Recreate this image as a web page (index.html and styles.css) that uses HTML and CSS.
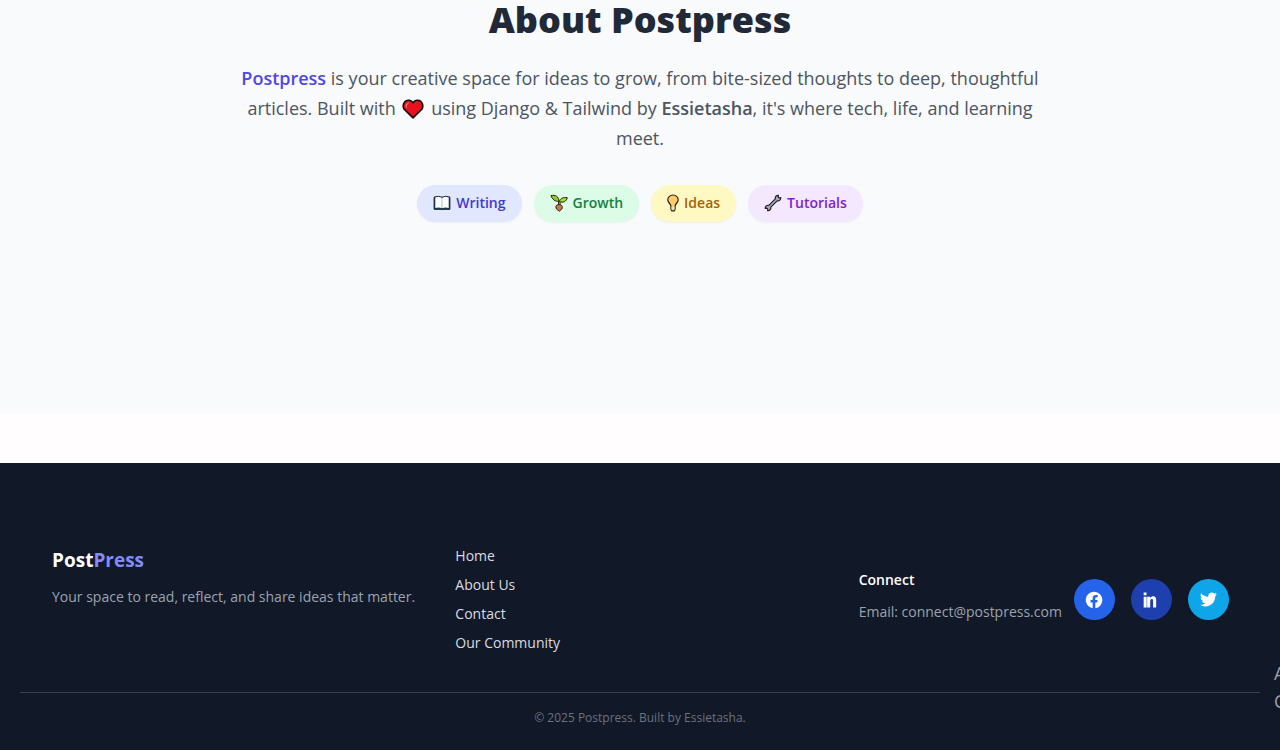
FILE: index.html
```html
<!DOCTYPE html>
<html lang="en">
<head>
<meta charset="utf-8">
<meta name="viewport" content="width=device-width, initial-scale=1">
<title>About Postpress</title>
<link rel="stylesheet" href="styles.css">
</head>
<body>
<main>
  <section class="about">
    <h1 class="about-title">About Postpress</h1>
    <p class="about-text"><strong class="brand-name">Postpress</strong> is your creative space for ideas to grow, from bite-sized thoughts to deep, thoughtful articles. Built with
      <svg class="heart" viewBox="0 0 22 20" role="img" aria-label="love"><path d="M11 18.8 1.9 10C1.2 8.5 1.1 6.4 1.6 4.8 2.5 2.6 4.3 1.3 6.5 1.3 8.5 1.3 10.1 2.2 11 3.8 11.9 2.2 13.5 1.3 15.5 1.3 17.7 1.3 19.5 2.6 20.4 4.8 20.9 6.4 20.8 8.5 20.1 10Z" fill="#e8121f" stroke="#150a0a" stroke-width="1.6" stroke-linejoin="round"/><path d="M4.4 8V5.8L6.2 4" fill="none" stroke="#ff6b6b" stroke-width="1.3" stroke-linecap="round"/></svg>
      using Django &amp; Tailwind by <strong class="author">Essietasha</strong>, it's where tech, life, and learning meet.</p>
    <ul class="tags">
      <li class="tag tag-writing"><svg class="tag-icon" viewBox="0 0 18 18" aria-hidden="true"><path d="M1 3.2H17V15.5H10L9 16.3 8 15.5H1Z" fill="#1d3b50"/><path d="M2.3 3.2Q6 2 8.9 3.4V14.2Q6 13.2 2.3 13.9ZM9.1 3.4Q12 2 15.7 3.2V13.9Q12 13.2 9.1 14.2Z" fill="#fff"/><path d="M1.1 3.2V15.3H16.9V3.2" fill="none" stroke="#172b3b"/><path d="M9 3.4V14" stroke="#b7bdc4" stroke-width=".6"/><path d="M1.1 3Q6 1.5 9 3.2 12 1.5 16.9 3" fill="none" stroke="#172b3b"/></svg>Writing</li>
      <li class="tag tag-growth"><svg class="tag-icon" viewBox="0 0 18 18" aria-hidden="true"><g stroke="#252410" stroke-linejoin="round"><path d="M9.3 12V7" stroke-width="2.6"/><path d="M9.3 12V7" stroke="#6db42c"/><path d="M9 7.3C5.2 7.8 2.3 5.4 1 1.6 5.5.5 9 2.8 9 7.3Z" fill="#8fce25"/><path d="M9.3 7.6C10.3 4.3 13.1 3 17.3 3.7 16.3 7.7 12.8 9 9.3 7.6Z" fill="#a4da32"/><path d="M9.3 10.6C6.5 10.3 5.5 12 6 14 6.5 15.7 8 16 9.3 17.2 10.5 16 12.1 15.6 12.3 13.8 12.5 11.9 11.5 10.6 9.3 10.6Z" fill="#cf7548"/></g></svg>Growth</li>
      <li class="tag tag-ideas"><svg class="tag-icon tag-icon-slim" viewBox="0 0 12 18" aria-hidden="true"><path d="M3.9 12C3.9 10 .8 8.7.8 5.8.8 3.1 3.2 1 6 1S11.2 3.1 11.2 5.8C11.2 8.7 8.1 10 8.1 12V15.2L7.2 16.8H4.8L3.9 15.2Z" fill="#ffcc66" stroke="#25221b" stroke-width="1.2"/><path d="M4.5 12.4H7.5V15.9H4.5Z" fill="#e6dfc4"/></svg>Ideas</li>
      <li class="tag tag-tutorials"><svg class="tag-icon" viewBox="0 0 18 18" aria-hidden="true"><path d="M11.3 4.8C11.1 2.6 12.3 1.2 14.4 1.3L14.2 2.9 15.1 3.8 16.8 3.6C16.9 5.8 15.3 7.1 13.2 6.8L6.8 13.2C7 15.5 5.7 16.9 3.6 16.7L3.8 15.1 2.9 14.2 1.2 14.4C1.1 12.2 2.7 11 4.8 11.3Z" fill="#a9aab2" stroke="#202027" stroke-width="1.2" stroke-linejoin="round"/></svg>Tutorials</li>
    </ul>
  </section>
</main>
<footer class="footer">
  <div class="footer-grid">
    <div>
      <h2 class="logo">Post<span class="logo-accent">Press</span></h2>
      <p class="muted">Your space to read, reflect, and share ideas that matter.</p>
    </div>
    <nav class="links" aria-label="Footer">
      <a href="#home">Home</a>
      <a href="#about">About Us</a>
      <a href="#contact">Contact</a>
      <a href="#community">Our Community</a>
    </nav>
    <div class="connect">
      <div class="connect-info">
        <h3 class="connect-title">Connect</h3>
        <p class="muted">Email: connect@postpress.com</p>
      </div>
      <div class="socials">
        <a class="social facebook" href="#facebook" aria-label="Facebook"><svg viewBox="0 0 24 24" aria-hidden="true"><path fill="currentColor" d="M22 12a10 10 0 1 0-11.6 9.9v-7H7.9V12h2.5V9.8c0-2.5 1.5-3.9 3.8-3.9 1.1 0 2.2.2 2.2.2v2.5h-1.3c-1.2 0-1.6.8-1.6 1.5V12h2.8l-.4 2.9h-2.3v7A10 10 0 0 0 22 12Z"/></svg></a>
        <a class="social linkedin" href="#linkedin" aria-label="LinkedIn"><svg viewBox="0 0 24 24" aria-hidden="true"><path fill="currentColor" d="M3.2 3H6.6V6.2H3.2ZM3.2 8H6.8V21H3.2ZM7.4 8H11V9.7C11.9 8.3 13.2 7.6 14.5 7.6 17.2 7.6 18.2 9.3 18.2 12.3V21H14.5V13.2C14.5 11.6 14 10.8 12.8 10.8 11.6 10.8 11 11.7 11 13.2V21H7.4Z"/></svg></a>
        <a class="social twitter" href="#twitter" aria-label="Twitter"><svg viewBox="0 0 24 24" aria-hidden="true"><path fill="currentColor" d="M23.95 4.57a10 10 0 0 1-2.82.78 4.96 4.96 0 0 0 2.16-2.73c-.95.56-2 .96-3.13 1.19a4.92 4.92 0 0 0-8.38 4.48A13.93 13.93 0 0 1 1.64 3.16a4.92 4.92 0 0 0 1.52 6.57 4.9 4.9 0 0 1-2.23-.61v.06a4.92 4.92 0 0 0 3.95 4.83 5 5 0 0 1-2.21.08 4.94 4.94 0 0 0 4.6 3.42A9.87 9.87 0 0 1 0 19.54a13.94 13.94 0 0 0 7.55 2.21c9.05 0 14-7.5 14-13.98 0-.21 0-.42-.02-.63a9.94 9.94 0 0 0 2.42-2.57Z"/></svg></a>
      </div>
    </div>
  </div>
  <p class="copyright">© 2025 Postpress. Built by Essietasha.</p>
  <div class="side-note"><span>A</span><span>C</span></div>
</footer>
</body>
</html>
```
FILE: styles.css
```css
* { box-sizing: border-box; }
body, h1, h2, h3, p, ul { margin: 0; padding: 0; }
body {
  background: #fffdfd;
  font-family: "Segoe UI", "Open Sans", "Noto Sans", sans-serif;
  font-size: 14px;
  line-height: 24px;
}
a { text-decoration: none; }

.about {
  padding: 0 24px 191px;
  background: #f9fafb;
  text-align: center;
}
.about-title {
  color: #1f2937;
  font-size: 36px;
  font-weight: 800;
  line-height: 40px;
}
.about-text {
  max-width: 816px;
  margin: 23px auto 0;
  color: #4b5563;
  font-size: 18px;
  line-height: 30px;
}
.brand-name { color: #4f46e5; font-weight: 600; }
.author { font-weight: 600; }
.heart {
  width: 22px;
  height: 20px;
  margin: 0 2px;
  vertical-align: -4px;
}
.tags {
  display: flex;
  flex-wrap: wrap;
  justify-content: center;
  gap: 12px;
  margin-top: 32px;
  list-style: none;
}
.tag {
  display: flex;
  align-items: center;
  gap: 5px;
  padding: 6px 16px 7px;
  border-radius: 20px;
  box-shadow: 0 1px 2px rgb(0 0 0 / 5%);
  font-weight: 600;
}
.tag-icon { width: 18px; height: 18px; }
.tag-icon-slim { width: 12px; }
.tag-writing { background: #e0e7ff; color: #4338ca; }
.tag-growth { background: #dcfce7; color: #15803d; }
.tag-ideas { background: #fef9c3; color: #a16207; }
.tag-tutorials { background: #f3e8ff; color: #7e22ce; }

.footer {
  position: relative;
  margin-top: 50px;
  padding: 81px 20px 20px;
  overflow: hidden;
  background: #111827;
}
.footer-grid {
  display: grid;
  grid-template-columns: repeat(3, minmax(0, 1fr));
  gap: 34px;
  padding: 0 32px 37px;
}
.logo {
  margin-bottom: 9px;
  color: #fff;
  font-size: 19px;
  font-weight: 700;
  line-height: 32px;
}
.logo-accent { color: #818cf8; }
.muted { color: #9ca3af; white-space: nowrap; }
.links {
  display: flex;
  flex-direction: column;
  align-items: flex-start;
  gap: 5px;
}
.links a { color: #d9dce1; }
.connect { display: flex; align-items: center; gap: 12px; }
.connect-info { padding-bottom: 8px; }
.connect-title {
  margin-bottom: 8px;
  color: #fff;
  font-size: 14px;
  font-weight: 600;
}
.socials { display: flex; gap: 16px; }
.social {
  display: grid;
  place-items: center;
  width: 41px;
  height: 41px;
  border-radius: 50%;
  color: #fff;
}
.social svg { width: 20px; height: 20px; }
.social.twitter svg { width: 17px; height: 17px; }
.facebook { background: #2563eb; }
.linkedin { background: #1e40af; }
.twitter { background: #0ea5e9; }
.copyright {
  padding-top: 13px;
  border-top: 1px solid #374151;
  color: #6b7280;
  font-size: 12px;
  text-align: center;
}
.side-note {
  position: absolute;
  top: 196px;
  left: calc(100% - 6px);
  display: grid;
  color: #9ca3af;
  font-size: 18px;
  line-height: 28px;
}
```
